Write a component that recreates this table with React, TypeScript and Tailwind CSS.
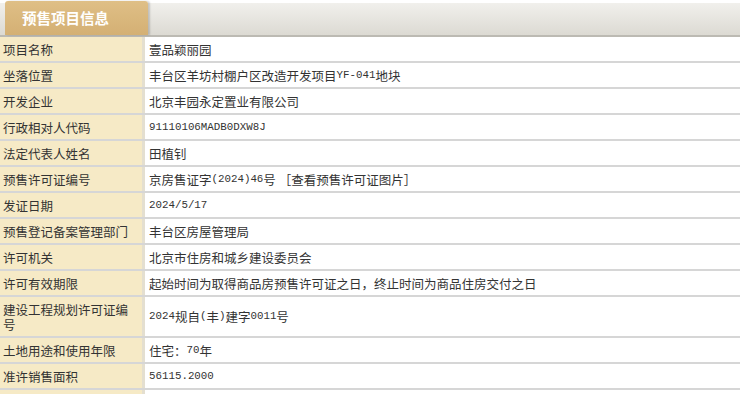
import React from "react";

const CJK = '"Noto Sans CJK SC", "Noto Sans", sans-serif';

function T({ s }: { s: string }) {
  const parts = s.split(/([\x21-\x7e][\x20-\x7e]*[\x21-\x7e]|[\x21-\x7e])/);
  return (
    <>
      {parts.map((p, i) =>
        /^[\x20-\x7e]+$/.test(p) && p.length > 0 ? (
          <span key={i} className="text-[10.8px]" style={{ fontFamily: '"Liberation Mono", monospace' }}>
            {p}
          </span>
        ) : (
          <span key={i}>{p}</span>
        )
      )}
    </>
  );
}

const rows: [string, string][] = [
  ["项目名称", "壹品颖丽园"],
  ["坐落位置", "丰台区羊坊村棚户区改造开发项目YF-041地块"],
  ["开发企业", "北京丰园永定置业有限公司"],
  ["行政相对人代码", "91110106MADB0DXW8J"],
  ["法定代表人姓名", "田植钊"],
  ["预售许可证编号", "京房售证字(2024)46号 ［查看预售许可证图片］"],
  ["发证日期", "2024/5/17"],
  ["预售登记备案管理部门", "丰台区房屋管理局"],
  ["许可机关", "北京市住房和城乡建设委员会"],
  ["许可有效期限", "起始时间为取得商品房预售许可证之日，终止时间为商品住房交付之日"],
  ["建设工程规划许可证编号", "2024规自(丰)建字0011号"],
  ["土地用途和使用年限", "住宅：70年"],
  ["准许销售面积", "56115.2000"],
  ["", ""],
];

export default function App() {
  return (
    <div className="w-[740px] h-[394px] overflow-hidden bg-white text-[12.5px] text-[#333333]" style={{ fontFamily: CJK }}>
      <div className="h-[37px] pt-[3px] bg-white">
        <div className="h-[34px] flex items-end bg-gradient-to-b from-[#f1f0ec] to-[#dcdad3] border-b-2 border-[#bcbab3] pl-[5px]">
          <div className="relative -mt-[2px] h-[34px] w-[143px] rounded-t-[3px] bg-gradient-to-b from-[#dfbf86] to-[#d4b074] flex items-center pl-[17px] text-white font-bold text-[14.5px] shadow-[2px_0_2px_rgba(0,0,0,0.18)]">
            预售项目信息
          </div>
        </div>
      </div>
      {rows.map(([k, v], i) => (
        <div key={i} className="flex border-b-2 border-[#d6d6d6]">
          <div className="w-[145px] shrink-0 bg-[#f6eac6] border-r-[3px] border-[#e4dfd0] pl-[3px] pr-[12px] py-[4.5px] leading-[15px] flex items-center">
            {k}
          </div>
          <div className="flex-1 pl-[4px] py-[4.5px] leading-[15px] flex items-center">
            <T s={v} />
          </div>
        </div>
      ))}
    </div>
  );
}
